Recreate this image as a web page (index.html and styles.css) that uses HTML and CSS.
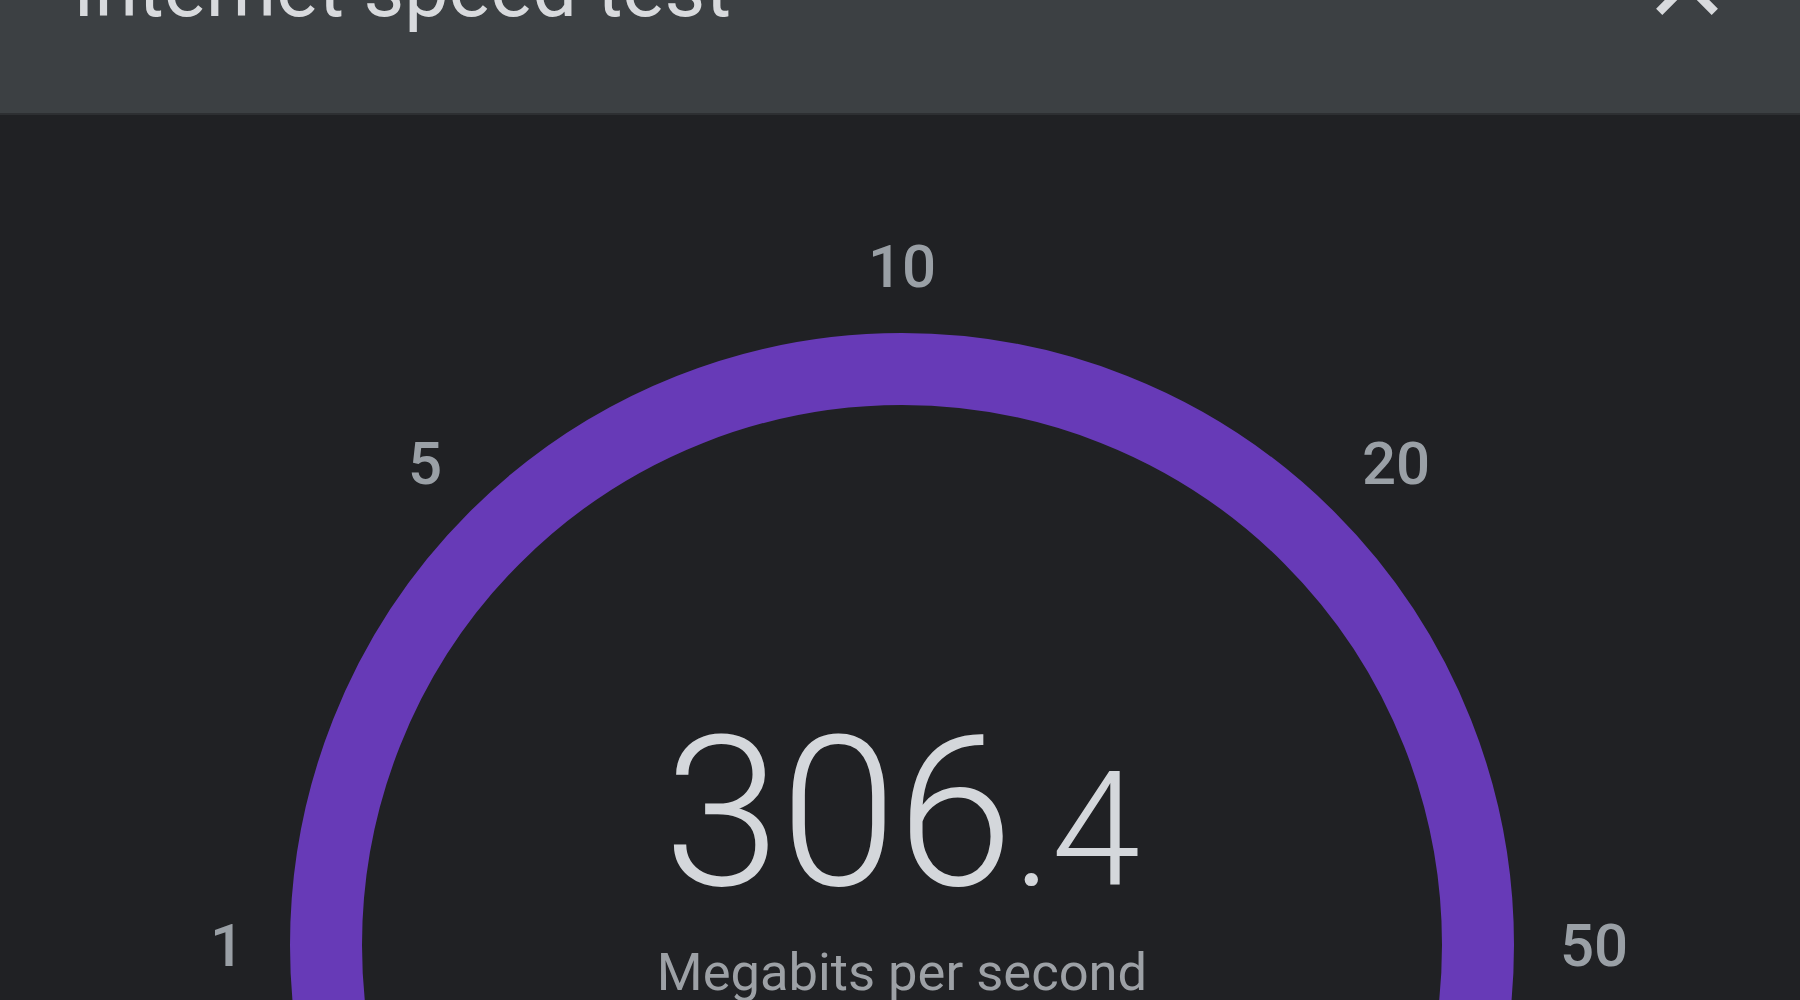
FILE: index.html
```html
<!DOCTYPE html>
<html lang="en">
<head>
<meta charset="utf-8">
<title>Internet speed test</title>
<link rel="stylesheet" href="styles.css">
</head>
<body>
  <header class="topbar">
    <h1 class="title">Internet speed test</h1>
    <svg class="close" viewBox="0 0 24 24" aria-label="Close">
      <path d="M19 6.41L17.59 5 12 10.59 6.41 5 5 6.41 10.59 12 5 17.59 6.41 19 12 13.41 17.59 19 19 17.59 13.41 12z"/>
    </svg>
  </header>
  <main class="gauge">
    <svg class="dial" viewBox="0 0 1800 885" width="1800" height="885">
      <circle cx="902" cy="830" r="576" fill="none" stroke="#673ab7" stroke-width="72"/>
    </svg>
    <span class="tick tick-1">1</span>
    <span class="tick tick-5">5</span>
    <span class="tick tick-10">10</span>
    <span class="tick tick-20">20</span>
    <span class="tick tick-50">50</span>
    <div class="readout">
      <div class="value">306<span class="decimal">.4</span></div>
      <div class="unit">Megabits per second</div>
    </div>
  </main>
</body>
</html>
```

FILE: styles.css
```css
html, body {
  margin: 0;
  padding: 0;
}

body {
  width: 1800px;
  height: 1000px;
  overflow: hidden;
  background: #202124;
  font-family: Roboto, "Liberation Sans", Arial, sans-serif;
}

.topbar {
  box-sizing: border-box;
  height: 115px;
  background: #3c4043;
  border-bottom: 2px solid #2d2f32;
  display: flex;
  justify-content: space-between;
  align-items: flex-start;
  padding: 0 60px 0 73px;
}

.title {
  margin: -50px 0 0 0;
  font-size: 79px;
  line-height: 1;
  font-weight: 400;
  color: #d8dadd;
}

.close {
  width: 106px;
  height: 106px;
  margin-top: -69px;
  fill: #d8dadd;
  flex: none;
}

.gauge {
  position: relative;
  box-sizing: border-box;
  height: 885px;
  padding: 593px 0 0 4px;
  display: flex;
  flex-direction: column;
  align-items: center;
}

.dial {
  position: absolute;
  left: 0;
  top: 0;
}

.tick {
  position: absolute;
  transform: translate(-50%, -50%);
  font-size: 60px;
  line-height: 1;
  font-weight: 500;
  color: #9aa0a6;
}

.tick-1 { left: 227px; top: 831px; }
.tick-5 { left: 425px; top: 349px; }
.tick-10 { left: 902px; top: 152px; }
.tick-20 { left: 1396px; top: 349px; }
.tick-50 { left: 1594px; top: 831px; }

.readout {
  position: relative;
  display: flex;
  flex-direction: column;
  align-items: center;
}

.value {
  font-size: 210px;
  line-height: 210px;
  font-weight: 300;
  color: #d4d7db;
}

.decimal {
  font-size: 160px;
  line-height: 1;
}

.unit {
  margin-top: 28px;
  font-size: 52.5px;
  line-height: 1;
  font-weight: 400;
  color: #9da1a6;
}
```
